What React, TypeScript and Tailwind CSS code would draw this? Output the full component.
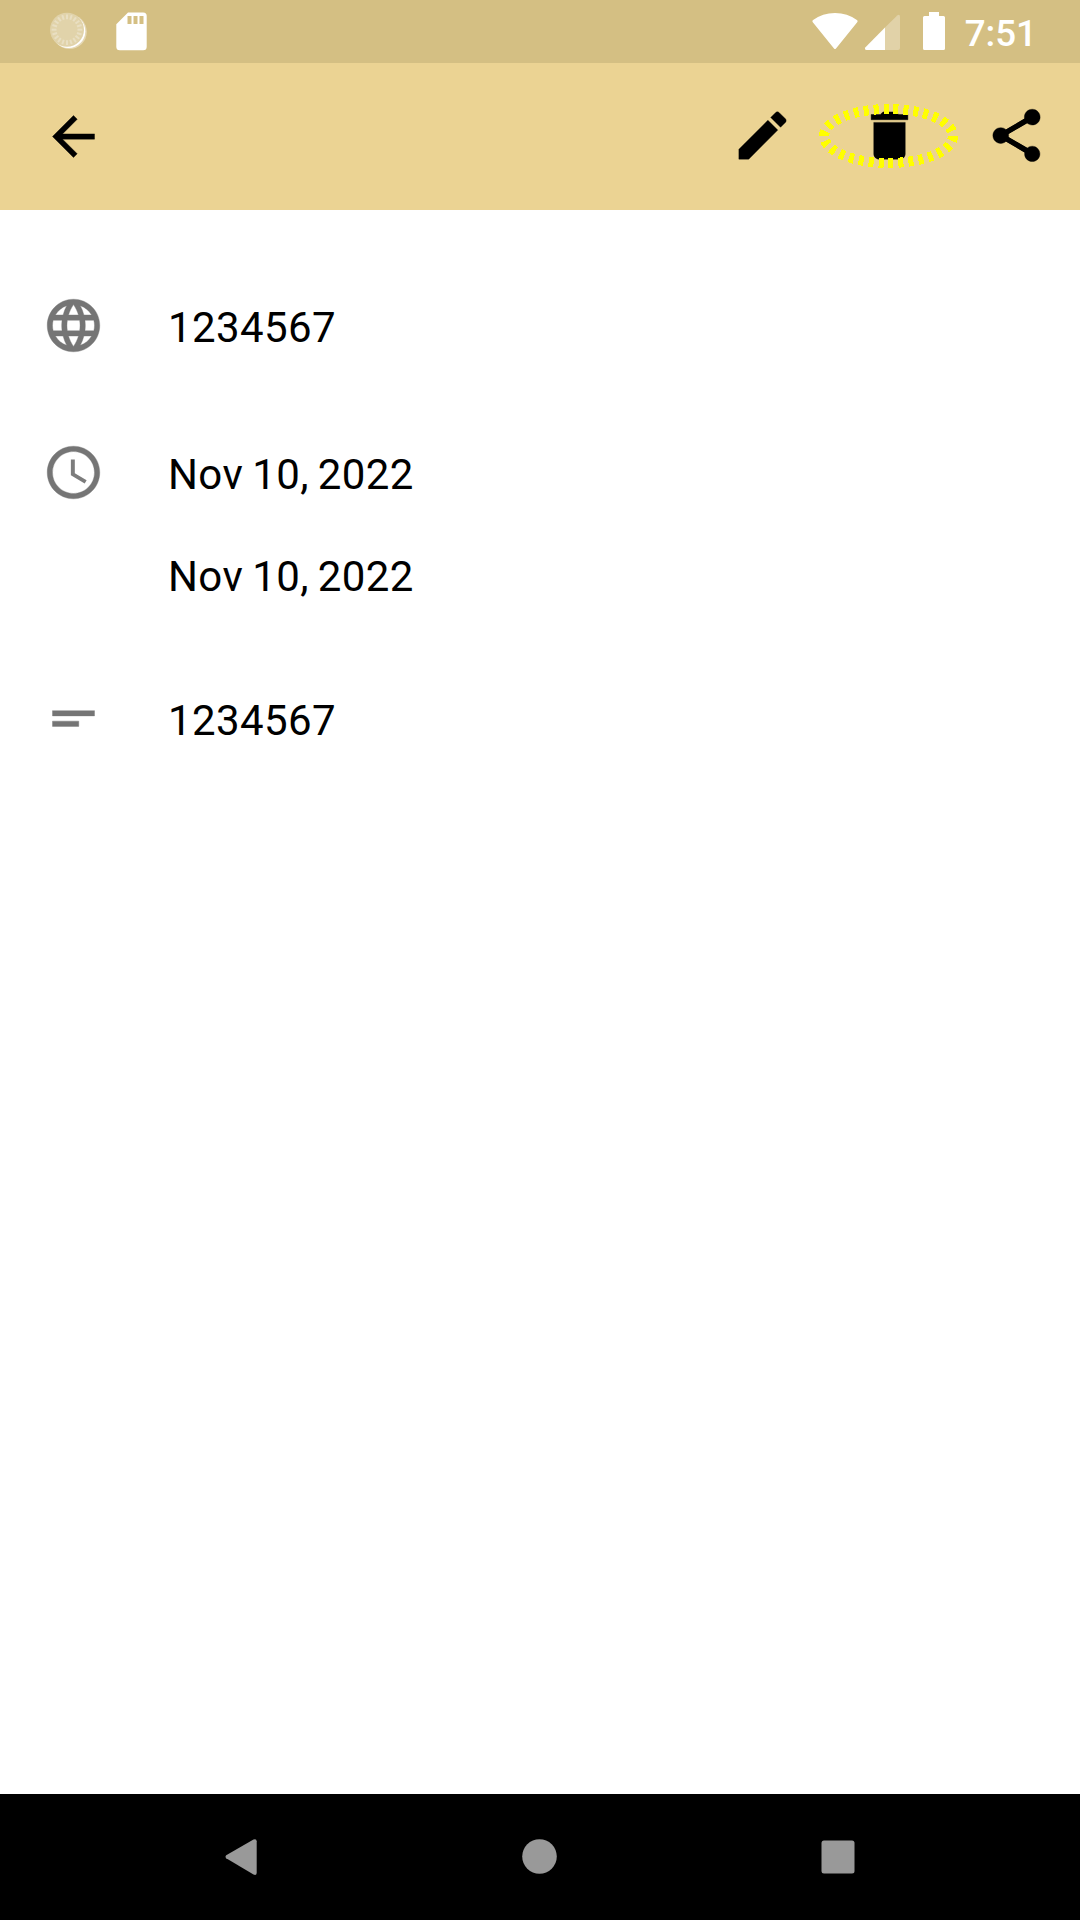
import type { ReactNode } from "react";

function Icon({ d, className, children }: { d: string; className?: string; children?: ReactNode }) {
  return (
    <svg viewBox="0 0 24 24" className={`size-[63px] shrink-0 ${className ?? ""}`} fill="currentColor" aria-hidden="true">
      <path d={d} stroke="currentColor" strokeWidth="0.15" />
      {children}
    </svg>
  );
}

const icons = {
  back: "M20 11H7.83l5.59-5.59L12 4l-8 8 8 8 1.41-1.41L7.83 13H20v-2z",
  edit: "M3 17.25V21h3.75L17.81 9.94l-3.75-3.75L3 17.25zM20.71 7.04c.39-.39.39-1.02 0-1.41l-2.34-2.34c-.39-.39-1.02-.39-1.41 0l-1.83 1.83 3.75 3.75 1.83-1.83z",
  trash: "M6 19c0 1.1.9 2 2 2h8c1.1 0 2-.9 2-2V7H6v12zM19 4h-3.5l-1-1h-5l-1 1H5v2h14V4z",
  share:
    "M18 16.08c-.76 0-1.44.3-1.96.77L8.91 12.7c.05-.23.09-.46.09-.7s-.04-.47-.09-.7l7.05-4.11c.54.5 1.25.81 2.04.81 1.66 0 3-1.34 3-3s-1.34-3-3-3-3 1.34-3 3c0 .24.04.47.09.7L8.04 9.81C7.5 9.31 6.79 9 6 9c-1.66 0-3 1.34-3 3s1.34 3 3 3c.79 0 1.5-.31 2.04-.81l7.12 4.16c-.05.21-.08.43-.08.65 0 1.61 1.31 2.92 2.92 2.92 1.61 0 2.92-1.31 2.92-2.92s-1.31-2.92-2.92-2.92z",
  globe:
    "M11.99 2C6.47 2 2 6.48 2 12s4.47 10 9.99 10C17.52 22 22 17.52 22 12S17.52 2 11.99 2zm6.93 6h-2.95c-.32-1.25-.78-2.45-1.38-3.56 1.84.63 3.37 1.91 4.33 3.56zM12 4.04c.83 1.2 1.48 2.53 1.91 3.96h-3.82c.43-1.43 1.08-2.76 1.91-3.96zM4.26 14C4.1 13.36 4 12.69 4 12s.1-1.36.26-2h3.38c-.08.66-.14 1.32-.14 2 0 .68.06 1.34.14 2H4.26zm.82 2h2.95c.32 1.25.78 2.45 1.38 3.56-1.84-.63-3.37-1.9-4.33-3.56zm2.95-8H5.08c.96-1.66 2.49-2.93 4.33-3.56C8.81 5.55 8.35 6.75 8.03 8zM12 19.96c-.83-1.2-1.48-2.53-1.91-3.96h3.82c-.43 1.43-1.08 2.76-1.91 3.96zM14.34 14H9.66c-.09-.66-.16-1.32-.16-2 0-.68.07-1.35.16-2h4.68c.09.65.16 1.32.16 2 0 .68-.07 1.34-.16 2zm.25 5.56c.6-1.11 1.06-2.31 1.38-3.56h2.95c-.96 1.65-2.49 2.93-4.33 3.56zM16.36 14c.08-.66.14-1.32.14-2 0-.68-.06-1.34-.14-2h3.38c.16.64.26 1.31.26 2s-.1 1.36-.26 2h-3.38z",
  clock:
    "M11.99 2C6.47 2 2 6.48 2 12s4.47 10 9.99 10C17.52 22 22 17.52 22 12S17.52 2 11.99 2zM12 20c-4.42 0-8-3.58-8-8s3.58-8 8-8 8 3.58 8 8-3.58 8-8 8z",
  clockHands: "M12.5 7H11v6l5.25 3.15.75-1.23-4.5-2.67z",
  notes: "M4 9h16v2H4V9zm0 4h10v2H4v-2z",
};

function StatusBar() {
  const ticks = Array.from({ length: 20 }, (_, i) => i * 18);
  return (
    <header className="flex h-[63px] items-start justify-between bg-[#d4bf83] pl-[49px] pr-[43px] text-white">
      <div className="flex gap-[27px] pt-[11px]">
        <svg width="40" height="40" viewBox="0 0 40 40" aria-hidden="true">
          <circle cx="20.5" cy="20.800" r="17.300" fill="#fff" opacity="0.4" />
          <circle cx="19.500" cy="20.200" r="16.800" fill="#fff" />
          <circle cx="18" cy="18.7" r="17" fill="#e1d3aa" />
          <g stroke="#e9dfc2" strokeWidth="2">
            {ticks.map((a) => (
              <path key={a} d="M18 3.4v4.800" transform={`rotate(${a} 18 18.7)`} />
            ))}
          </g>
        </svg>
        <svg width="31" height="40" viewBox="0 0 31 40" fill="#fff" aria-hidden="true">
          <path
            fillRule="evenodd"
            d="M12 1.5h15.200a3.500 3.500 0 0 1 3.500 3.500v30.800a3.500 3.500 0 0 1-3.500 3.500H3.800A3.500 3.500 0 0 1 .3 35.800V13.200zM11.500 5v8h4V5zm6 0v8h4V5zm6 0v8h4V5z"
          />
        </svg>
      </div>
      <div className="flex pt-[11px]">
        <svg width="134" height="40" viewBox="812 11 134 40" fill="#fff" aria-hidden="true">
          <path d="M834 48.400q1 1.200 2 0l21.200-26.200q.9-1.200-.3-2.100Q847.500 13 835 13t-21.900 7.100q-1.200.9-.3 2.100z" />
          <path opacity="0.3" d="M885 27.500l12.200-12q2.800-1.800 2.800 1.500v31q0 2-2 2h-13z" />
          <path d="M885 27.500V50h-18.500q-2.500-.6-1-2.800z" />
          <path d="M929 12h10v4h4.500q1.500 0 1.500 1.500v31q0 1.500-1.500 1.500h-19q-1.500 0-1.500-1.500v-31q0-1.500 1.500-1.500h4.500z" />
        </svg>
        <span className="ml-[19px] mt-px text-[36.750px] font-medium leading-[43px]">7:51</span>
      </div>
    </header>
  );
}

function Toolbar() {
  return (
    <nav className="flex h-[147px] items-center bg-[#ebd393] pl-[42px] pr-8">
      <button aria-label="Back">
        <Icon d={icons.back} />
      </button>
      <div className="mb-[2px] ml-auto flex gap-16">
        <button aria-label="Edit">
          <Icon d={icons.edit} />
        </button>
        <button aria-label="Delete" className="relative">
          <Icon d={icons.trash} />
          <svg className="absolute -left-[39px] -top-px" width="140" height="66" viewBox="0 0 140 66" fill="none" shapeRendering="crispEdges">
            <ellipse cx="69.500" cy="33" rx="64.500" ry="27" stroke="#ff0" strokeWidth="10" pathLength="300" strokeDasharray="5 5" />
          </svg>
        </button>
        <button aria-label="Share">
          <Icon d={icons.share}>
            <path d="M18 5L6 12l12 7" fill="none" stroke="currentColor" strokeWidth="2" />
          </Icon>
        </button>
      </div>
    </nav>
  );
}

function DetailRow({ icon, className, children }: { icon: ReactNode; className?: string; children: ReactNode }) {
  return (
    <section className={`flex items-start gap-[63px] ${className ?? ""}`}>
      {icon}
      <div className="flex flex-col gap-[53px] pt-[9px] text-[42px] leading-[49px] tracking-[0.4px] text-black [word-spacing:-1.8px]">
        {children}
      </div>
    </section>
  );
}

export default function App() {
  return (
    <div className="flex h-[1920px] w-[1080px] flex-col bg-white font-['Roboto',sans-serif]">
      <StatusBar />
      <Toolbar />
      <main className="flex-1 px-[42px] pt-[84px]">
        <DetailRow icon={<Icon d={icons.globe} className="text-[#757575]" />}>
          <p>1234567</p>
        </DetailRow>
        <DetailRow
          className="mt-[84px]"
          icon={
            <Icon d={icons.clock} className="text-[#757575]">
              <path d={icons.clockHands} opacity="0.95" />
            </Icon>
          }
        >
          <p>Nov 10, 2022</p>
          <p>Nov 10, 2022</p>
        </DetailRow>
        <DetailRow className="mt-[86px]" icon={<Icon d={icons.notes} className="text-[#757575]" />}>
          <p>1234567</p>
        </DetailRow>
      </main>
      <footer className="flex h-[126px] items-center justify-between bg-black px-[225px] text-[#999]">
        <svg width="32" height="38" viewBox="0 0 32 38" fill="currentColor" aria-label="Back">
          <path d="M1.200 17.200Q-.2 18.700 1.200 20.200L28.500 36.600q3 1.200 3.200-1.500V3.200Q31.500.400 28.500 1.500z" />
        </svg>
        <svg className="mb-px" width="35" height="35" viewBox="0 0 35 35" fill="currentColor" aria-label="Home">
          <circle cx="17.500" cy="17.500" r="17.300" />
        </svg>
        <svg width="34" height="34" viewBox="0 0 34 34" fill="currentColor" aria-label="Overview">
          <rect x=".5" y=".5" width="33" height="33" rx="2.500" />
        </svg>
      </footer>
    </div>
  );
}
